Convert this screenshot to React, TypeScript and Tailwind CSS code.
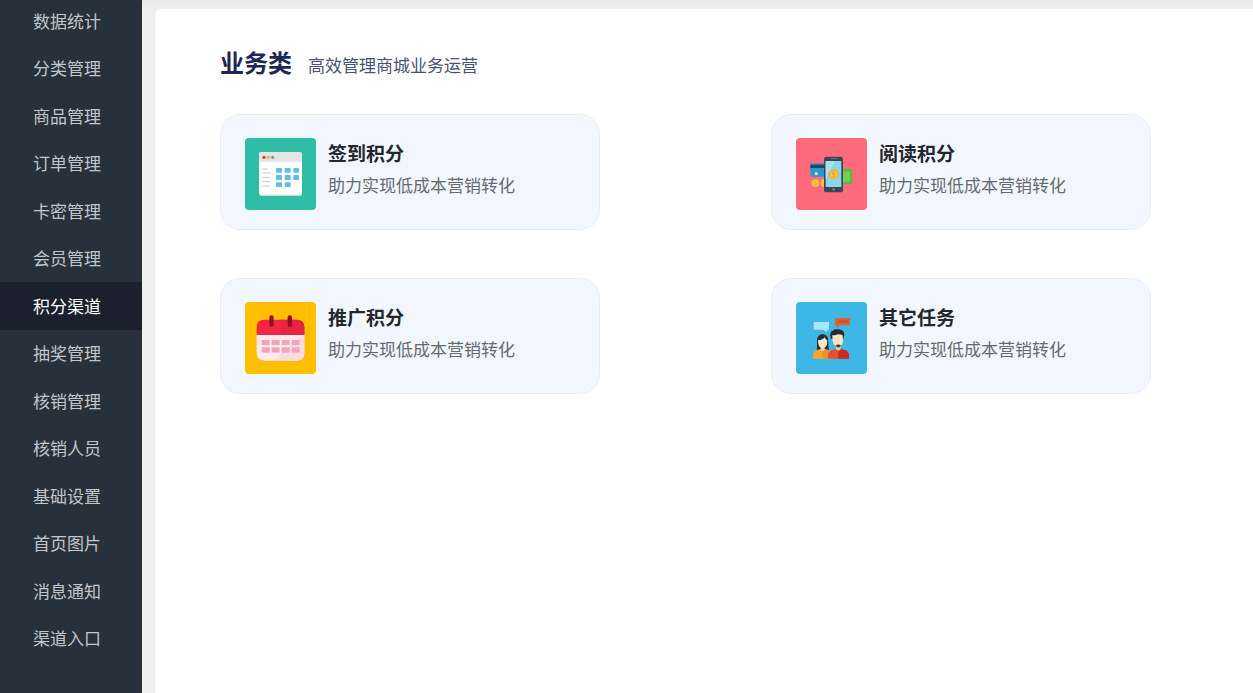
import type { ReactNode } from 'react';
import clsx from 'clsx';

const menu = [
  '数据统计',
  '分类管理',
  '商品管理',
  '订单管理',
  '卡密管理',
  '会员管理',
  '积分渠道',
  '抽奖管理',
  '核销管理',
  '核销人员',
  '基础设置',
  '首页图片',
  '消息通知',
  '渠道入口',
];

function CheckInIcon() {
  return (
    <svg viewBox="15 18 213 216" className="w-[71px] h-[72px] shrink-0" aria-hidden="true">
      <rect x="15" y="18" width="213" height="216" rx="12" fill="#2fbda5" />
      <rect x="57" y="60" width="129" height="132" rx="7" fill="#d3dedf" />
      <path d="M57 88h129v93q0 7-7 7H64q-7 0-7-7z" fill="#fdfefe" />
      <path d="M64 60h115q7 0 7 7v22H57V67q0-7 7-7z" fill="#e4e4e3" />
      <circle cx="72" cy="76" r="5" fill="#d9453f" />
      <circle cx="85" cy="76" r="5" fill="#dfb25c" />
      <circle cx="98" cy="76" r="5" fill="#6fa860" />
      <path d="M67 111h16M67 123h25M67 136h23M67 149h25M67 162h22" stroke="#c9cdd0" strokeWidth="3" />
      <g fill="#62bfdd">
        <rect x="108" y="108" width="18" height="14" rx="2" />
        <rect x="134" y="108" width="18" height="14" rx="2" />
        <rect x="160" y="108" width="17" height="14" rx="2" />
        <rect x="108" y="129" width="18" height="15" rx="2" />
        <rect x="134" y="129" width="18" height="15" rx="2" />
        <rect x="160" y="129" width="17" height="15" rx="2" />
        <rect x="108" y="151" width="18" height="14" rx="2" />
        <rect x="134" y="151" width="18" height="14" rx="2" />
      </g>
    </svg>
  );
}

function ReadIcon() {
  return (
    <svg viewBox="18 18 213 216" className="w-[71px] h-[72px] shrink-0" aria-hidden="true">
      <rect x="18" y="18" width="213" height="216" rx="12" fill="#ff6b7c" />
      <rect x="61" y="94" width="60" height="40" rx="4" fill="#2d97d3" />
      <rect x="61" y="98" width="50" height="10" fill="#25455f" />
      <circle cx="79" cy="125" r="5" fill="#c9e3a0" />
      <rect x="145" y="111" width="42" height="46" rx="3" fill="#57b947" />
      <path d="M158 118h22v31h-22z" fill="#7bcb52" />
      <circle cx="76" cy="153" r="12" fill="#fbb72f" />
      <circle cx="76" cy="153" r="8" fill="#fcd04c" />
      <path d="M79 148h-5v5h5v5h-6" stroke="#e9932c" strokeWidth="2" fill="none" />
      <circle cx="104" cy="153" r="12" fill="#fcc63d" />
      <rect x="102" y="74" width="57" height="107" rx="8" fill="#3b4654" />
      <rect x="107" y="87" width="47" height="78" fill="#8bd6e8" />
      <path d="M107 87h28l-28 55z" fill="#a6e3ef" />
      <path d="M122 80h18" stroke="#75808b" strokeWidth="2" />
      <circle cx="131" cy="172" r="4" fill="#717c87" />
      <circle cx="131" cy="127" r="15" fill="#f9ad27" />
      <circle cx="131" cy="127" r="11" fill="#fcc944" />
      <path d="M135 121h-7v6h7v7h-8M131 118v19" stroke="#ed962b" strokeWidth="2" fill="none" />
    </svg>
  );
}

function PromoteIcon() {
  return (
    <svg viewBox="15 15 213 216" className="w-[71px] h-[72px] shrink-0" aria-hidden="true">
      <rect x="15" y="15" width="213" height="216" rx="12" fill="#ffbe00" />
      <path d="M50 108h143v61q0 22-22 22H74q-24 0-24-22z" fill="#fceaf0" />
      <path d="M193 112v57q0 22-22 22H98z" fill="#f7dce5" />
      <path d="M72 68h98q23 0 23 23v23H50V91q0-23 22-23z" fill="#f12744" />
      <path d="M122 68h48q23 0 23 23v23h-71z" fill="#e82442" />
      <rect x="88" y="55" width="13" height="35" rx="6" fill="#970f24" />
      <rect x="143" y="55" width="13" height="35" rx="6" fill="#970f24" />
      <g fill="#f1a5b9">
        <rect x="65" y="129" width="24" height="15" />
        <rect x="95" y="129" width="24" height="15" />
        <rect x="125" y="129" width="24" height="15" />
        <rect x="155" y="129" width="24" height="15" />
        <rect x="65" y="151" width="24" height="16" />
        <rect x="95" y="151" width="24" height="16" />
        <rect x="125" y="151" width="24" height="16" />
        <rect x="155" y="151" width="24" height="16" />
      </g>
    </svg>
  );
}

function TaskIcon() {
  return (
    <svg viewBox="18 15 213 216" className="w-[71px] h-[72px] shrink-0" aria-hidden="true">
      <rect x="18" y="15" width="213" height="216" rx="12" fill="#3fb7e4" />
      <path d="M71 75h46v23h-3l-5 8-9-8H71z" fill="#a9e6fb" />
      <path d="M135 63h45v22h-30l-9 8-2-8h-4z" fill="#de6036" />
      <path d="M143 69h30v9h-30z" fill="#c9512f" />
      <path d="M80 158c2-8 1-18 1-26 0-13 7-20 17-20s17 7 17 20c0 8 0 18 2 26z" fill="#252b31" />
      <path d="M69 185v-10q0-12 13-16l10-3h12l10 3q10 4 10 16v10z" fill="#f6a42a" />
      <path d="M98 185v-29h6l10 3q10 4 10 16v10z" fill="#e9922a" />
      <path d="M92 148h12v10q-6 7-12 0z" fill="#f3cda9" />
      <path d="M84 130q14-1 20-9 3 7 8 9 0 24-14 24t-14-24z" fill="#ffe8cb" />
      <path d="M114 185v-9q0-13 13-17l12-4h12l13 4q13 4 13 17v9z" fill="#e4512b" />
      <path d="M145 185v-30h6l13 4q13 4 13 17v9z" fill="#c92b2b" />
      <path d="M138 146h14v11q-7 7-14 0z" fill="#f1c8a3" />
      <path d="M122 124q-5-21 7-23 2-5 12-4 22 0 22 16l-3 13h-34z" fill="#252b31" />
      <path d="M127 114q9 2 16-2 9 0 15 3 5 34-13 35-20-1-18-36z" fill="#ffe4c3" />
      <path d="M137 145q8-5 16 0l-4 6h-8z" fill="#343438" />
    </svg>
  );
}

const channels: { title: string; desc: string; icon: ReactNode }[] = [
  { title: '签到积分', desc: '助力实现低成本营销转化', icon: <CheckInIcon /> },
  { title: '阅读积分', desc: '助力实现低成本营销转化', icon: <ReadIcon /> },
  { title: '推广积分', desc: '助力实现低成本营销转化', icon: <PromoteIcon /> },
  { title: '其它任务', desc: '助力实现低成本营销转化', icon: <TaskIcon /> },
];

export default function App() {
  return (
    <div className="flex min-h-screen bg-[#f0f0f0] font-['Noto_Sans_CJK_SC',sans-serif]">
      <aside className="w-[142px] shrink-0 bg-[#26313c]">
        {/* the list is scrolled slightly past its first row */}
        <nav className="-mt-[3px] grid h-[665px] auto-rows-fr">
          {menu.map((label) => (
            <a
              key={label}
              href="#"
              className={clsx(
                'flex items-center pl-[33px] text-[17px] leading-6',
                label === '积分渠道' ? 'bg-[#1a202d] text-white' : 'text-[#c3c6c9]'
              )}
            >
              {label}
            </a>
          ))}
        </nav>
      </aside>

      <div className="flex flex-1 flex-col bg-linear-to-b from-[#e9e9e9] to-[#f0f0f0] to-[9px] pl-[13px] pt-[9px]">
        <main className="flex-1 rounded-tl-md bg-white pl-[65px] pr-[102px] pt-[35px]">
          <header className="flex items-baseline gap-4">
            <h1 className="text-2xl leading-9 font-bold text-[#1f2555]">业务类</h1>
            <p className="text-[17px] leading-6 text-[#4b5078]">高效管理商城业务运营</p>
          </header>

          <section className="mt-[34px] grid grid-cols-2 gap-x-[171px] gap-y-12">
            {channels.map((item) => (
              <a
                key={item.title}
                href="#"
                className="flex gap-3 rounded-[20px] border border-[#e8eef8] bg-[#f2f7ff] px-6 pt-[23px] pb-[19px]"
              >
                {item.icon}
                <div>
                  <h2 className="text-[19px] leading-[30px] font-bold text-[#22272e]">{item.title}</h2>
                  <p className="text-[17px] leading-[34px] text-[#666a70]">{item.desc}</p>
                </div>
              </a>
            ))}
          </section>
        </main>
      </div>
    </div>
  );
}
